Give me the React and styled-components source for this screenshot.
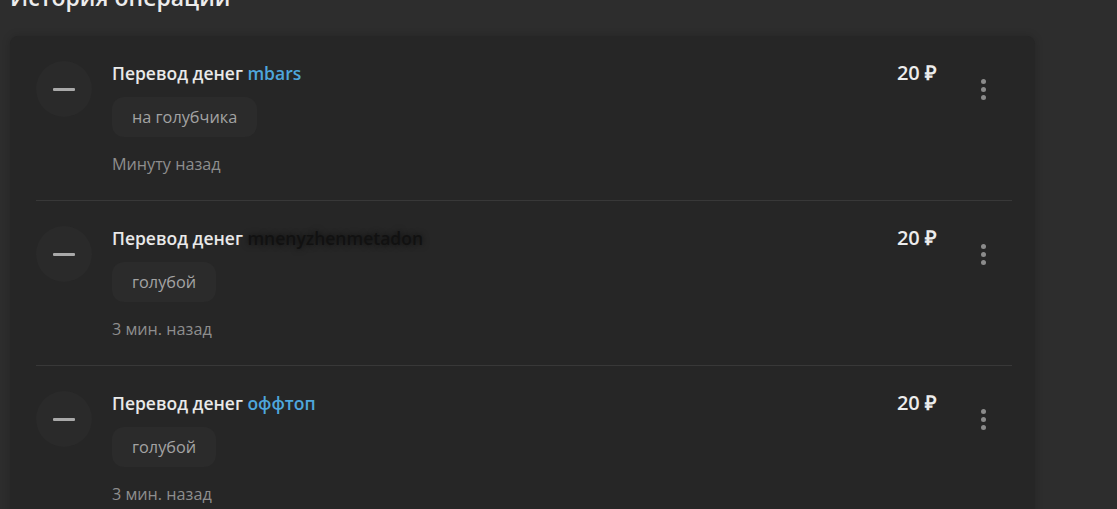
import React from "react";
import styled, { createGlobalStyle } from "styled-components";

const GlobalStyle = createGlobalStyle`
  body {
    margin: 0;
    background: #2d2d2d;
    font-family: "Open Sans", "Liberation Sans", sans-serif;
    overflow: hidden;
  }
`;

const Page = styled.div`
  padding: 0 10px;
`;

const Title = styled.h1`
  margin: -18px 0 0;
  font-size: 23px;
  font-weight: 600;
  line-height: 31px;
  color: #ececec;
`;

const Card = styled.div`
  margin-top: 23px;
  width: 1025px;
  background: #262626;
  border-radius: 8px;
  box-shadow: 0 0 8px rgba(0, 0, 0, 0.18);
`;

const Row = styled.div`
  display: flex;
  align-items: flex-start;
  margin: 0 23px 0 26px;
  padding: 25px 0 26px;
  border-bottom: ${p => (p.$last ? "none" : "1px solid #383838")};
`;

const Avatar = styled.div`
  flex: none;
  width: 56px;
  height: 56px;
  border-radius: 50%;
  background: #2a2a2a;
  display: flex;
  align-items: center;
  justify-content: center;
`;

const Dash = styled.span`
  width: 22px;
  height: 3px;
  border-radius: 1px;
  background: #a9a9a9;
`;

const Body = styled.div`
  flex: 1;
  margin-left: 20px;
  padding-top: 1px;
`;

const Head = styled.div`
  font-size: 17.5px;
  font-weight: 600;
  line-height: 22px;
  color: #e9e9e9;
`;

const User = styled.span`
  color: ${p => (p.$masked ? "#111" : "#4ea6dc")};
  text-shadow: ${p => (p.$masked ? "0 0 6px rgba(0,0,0,0.7)" : "none")};
`;

const Tag = styled.div`
  display: inline-flex;
  align-items: center;
  height: 40px;
  margin-top: 13px;
  padding: 0 20px;
  border-radius: 12px;
  background: #2b2b2b;
  color: #a3a3a3;
  font-size: 16.3px;
`;

const Time = styled.div`
  margin-top: 17px;
  font-size: 16.2px;
  line-height: 20px;
  color: #8e8e8e;
`;

const Amount = styled.div`
  font-size: 20px;
  font-weight: 600;
  line-height: 24px;
  color: #ececec;
  margin-top: 0;
`;

const Menu = styled.button`
  width: 24px;
  margin: 18px 17px 0 34px;
  padding: 0;
  border: none;
  background: none;
  display: flex;
  flex-direction: column;
  align-items: center;
  gap: 3px;
  cursor: pointer;
`;

const Dot = styled.span`
  width: 5px;
  height: 5px;
  border-radius: 50%;
  background: #8b8b8b;
`;

const ops = [
  { user: "mbars", tag: "на голубчика", time: "Минуту назад" },
  { user: "mnenyzhenmetadon", tag: "голубой", time: "3 мин. назад", masked: true },
  { user: "оффтоп", tag: "голубой", time: "3 мин. назад" },
];

export default function App() {
  return (
    <Page>
      <GlobalStyle />
      <Title>История операций</Title>
      <Card>
        {ops.map((op, i) => (
          <Row key={i} $last={i === ops.length - 1}>
            <Avatar>
              <Dash />
            </Avatar>
            <Body>
              <Head>
                Перевод денег <User $masked={op.masked}>{op.user}</User>
              </Head>
              <Tag>{op.tag}</Tag>
              <Time>{op.time}</Time>
            </Body>
            <Amount>20 ₽</Amount>
            <Menu>
              <Dot />
              <Dot />
              <Dot />
            </Menu>
          </Row>
        ))}
      </Card>
    </Page>
  );
}
